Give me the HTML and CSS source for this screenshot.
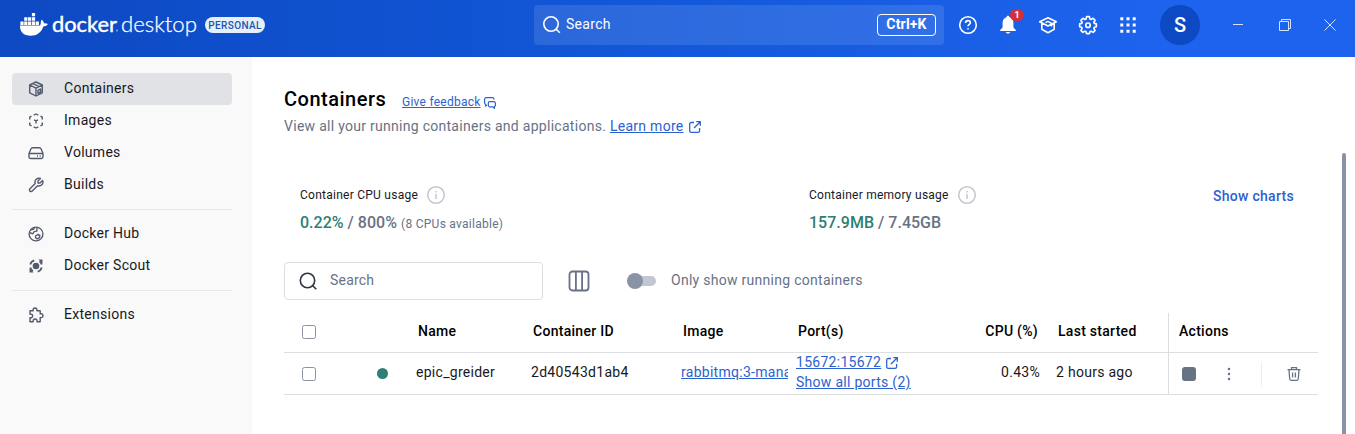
FILE: index.html
```html
<!DOCTYPE html>
<html lang="en">
<head>
<meta charset="utf-8">
<title>Docker Desktop</title>
<link rel="stylesheet" href="styles.css">
</head>
<body>
<header class="topbar">
  <div class="brand">
    <svg class="logo" width="178" height="36" viewBox="0 0 178 36" fill="#fff">
      <path d="M0 13.6h19.6c.8-.5 1.300-1.300 1.200-2.500-.1-1.300.1-2.300.8-3.300 1.500 1 2.200 2 2.300 3.400 1.500-.2 2.900 0 4 .7-.9 1.700-2.300 2.300-4.400 2.300C21.200 20.500 17 23.700 10.600 23.700 3.700 23.700-.3 20.200 0 13.600z"/>
      <path d="M.4 9.600h3.200v3.300H.4zM4.200 9.600h3.200v3.300H4.200zM8 9.600h3.200v3.300H8zM11.900 9.600h3.200v3.300h-3.200zM15.700 9.600h3.200v3.300h-3.200zM4.200 5.300h3.200v3.500H4.200zM8 5.300h3.200v3.500H8zM11.900 5.300h3.200v3.500h-3.200zM11.900 1.100h3.200V4.300h-3.200z"/>
      <text class="logo-docker" x="32" y="19.800" textLength="65" lengthAdjust="spacingAndGlyphs">docker</text>
      <circle cx="97" cy="18.500" r=".9" fill="#8fb4f5"/>
      <text class="logo-desktop" x="101" y="19.800" textLength="76" lengthAdjust="spacingAndGlyphs">desktop</text>
    </svg>
    <span class="plan">PERSONAL</span>
  </div>
  <div class="global-search">
    <svg width="20" height="20" viewBox="0 0 20 20" fill="none" stroke="#fff" stroke-width="1.600"><circle cx="9" cy="9" r="7.200"/><path d="M14 14l3.800 3.800"/></svg>
    <span class="global-label">Search</span>
    <kbd>Ctrl+K</kbd>
  </div>
  <div class="tools">
    <svg width="20" height="20" viewBox="0 0 20 20" fill="none" stroke="#fff" stroke-width="1.600"><circle cx="10" cy="10" r="8.300"/><path d="M7.600 8c0-1.500 1-2.400 2.400-2.400s2.400.9 2.400 2.200c0 1.600-2.400 1.700-2.400 3.500" /><circle cx="10" cy="13.800" r=".5" fill="#fff" stroke-width=".8"/></svg>
    <span class="bell">
      <svg width="20" height="20" viewBox="0 0 20 20" fill="#fff"><path d="M10 .8c.9 0 1.500.6 1.500 1.500 2.400.7 3.900 2.800 3.900 5.500v4.700l2.400 2.600v1H2.200v-1l2.400-2.600V7.800c0-2.700 1.500-4.800 3.900-5.500C8.500 1.400 9.100.8 10 .8zM7.800 17h4.400c-.3 1-1.200 1.500-2.200 1.500S8.100 18 7.800 17z"/></svg>
      <b class="count">1</b>
    </span>
    <svg width="20" height="20" viewBox="0 0 20 20" fill="none" stroke="#fff" stroke-width="1.600" stroke-linejoin="round"><path d="M10 2.700L1.700 6.800 10 11l8.300-4.200zM3.800 8.200v6l6.200 3.500 6.200-3.500v-6M7.500 7.600L10 6.400l3.500 2v3"/></svg>
    <svg width="20" height="20" viewBox="0 0 24 24" fill="none" stroke="#fff" stroke-width="2" stroke-linejoin="round"><path d="M10.300 2h3.400l.6 2.800 1.400.6 2.400-1.500 2.400 2.400-1.500 2.400.6 1.400 2.400.6v3.400l-2.400.6-.6 1.400 1.500 2.400-2.400 2.400-2.400-1.500-1.400.6-.6 2.400h-3.400l-.6-2.400-1.400-.6-2.400 1.500-2.400-2.400L5 16.100l-.6-1.400-2.400-.6v-3.400l2.400-.6.600-1.400-1.500-2.400 2.400-2.400 2.400 1.500 1.400-.6z"/><circle cx="12" cy="12.300" r="2.700"/></svg>
    <svg width="20" height="20" viewBox="0 0 20 20" fill="#fff"><path d="M2.300 2.300h3v3h-3zM8.500 2.300h3v3h-3zM14.700 2.300h3v3h-3zM2.300 8.500h3v3h-3zM8.500 8.500h3v3h-3zM14.700 8.500h3v3h-3zM2.300 14.700h3v3h-3zM8.500 14.700h3v3h-3zM14.700 14.700h3v3h-3z"/></svg>
  </div>
  <span class="avatar">S</span>
  <div class="window">
    <svg width="12" height="12" viewBox="0 0 12 12"><path d="M1 5.500h10"/></svg>
    <svg width="12" height="12" viewBox="0 0 12 12"><path d="M.5 2.500h9v9h-9zM2.500 2.500v-2h9v9h-2"/></svg>
    <svg width="12" height="12" viewBox="0 0 12 12"><path d="M.5.500l11 11M11.500.500l-11 11"/></svg>
  </div>
</header>
<div class="body">
  <nav class="sidebar">
    <a class="item active"><svg width="16" height="16" viewBox="0 0 16 16"><path d="M8 1l6.300 3v7.800L8 15l-6.300-3.200V4zM1.700 4L8 7.200 14.300 4M8 7.200V15M4.800 2.500l6.300 3.200M10 9.300l2.600-1.300v3L10 12.300z"/></svg>Containers</a>
    <a class="item"><svg width="16" height="16" viewBox="0 0 16 16"><path d="M5.700 2.200L8 1l2.300 1.200M12.500 3.200l1.800 1v2.300M14.300 9.500v2.300l-1.800 1M10.300 13.800L8 15l-2.300-1.200M3.500 12.800l-1.800-1V9.500M1.700 6.500V4.200l1.800-1M6 6.800l2 1 2-1M8 7.800v2.600"/></svg>Images</a>
    <a class="item"><svg width="16" height="16" viewBox="0 0 16 16"><path d="M1 8.500l2-4.700C3.300 3 4 2.700 4.700 2.700h6.600c.7 0 1.400.3 1.700 1.100l2 4.700v3.300c0 1-.6 1.700-1.700 1.700H2.700C1.600 13.500 1 12.800 1 11.800zM1 8.500h14M9 11h1M11.700 11h1"/></svg>Volumes</a>
    <a class="item"><svg width="16" height="16" viewBox="0 0 16 16"><path d="M12.500 1.500L10 4v2h2l2.600-2.500c.6 1.700.3 3.200-.8 4.300-1.200 1.200-2.800 1.500-4.200 1L4.300 14c-.7.700-1.600.7-2.300.100s-.7-1.600 0-2.300l5.200-5.300c-.5-1.400-.2-3 1-4.200 1.100-1 2.700-1.400 4.300-.800z"/></svg>Builds</a>
    <hr>
    <a class="item"><svg width="16" height="16" viewBox="0 0 16 16"><circle cx="8" cy="8" r="6.900"/><path d="M1.500 6.500l3.200 1.300 1.500-2.200 2.600-.5L9 1.300M3 3.700l2.500-.3L6.700 1.500M7.500 10l2.300-1.500 2 1-.3 2.200-2.200 1.200-1.600-1z"/></svg>Docker Hub</a>
    <a class="item"><svg width="16" height="16" viewBox="0 0 16 16"><circle cx="8" cy="8" r="3.300" fill="#535c6d" stroke="none"/><path d="M2.300 6.500C2.700 4.500 4 3 6.300 2.300M9.700 13.700c2-.6 3.400-2 4-4.200M2.300 9.500c.4 1.800 1.400 3 2.700 3.700M13.700 6.500c-.3-1.300-1-2.400-2.200-3.200" stroke-width="1.800"/><path d="M10.500 1.500h4v4zM1.500 10.500v4h4z" fill="#535c6d" stroke="none"/></svg>Docker Scout</a>
    <hr>
    <a class="item"><svg width="16" height="16" viewBox="0 0 16 16"><path d="M2 3.700h3.200C4.700 2 5.600 1 7 1s2.300 1 1.800 2.700h3.400v3.200c1.800-.4 2.800.5 2.800 1.800s-1 2.200-2.800 1.800v4.200H9c.4-1.700-.5-2.700-1.900-2.700s-2.200 1-1.900 2.700H2v-4c1.700.3 2.600-.5 2.600-1.800S3.700 6.800 2 7.200z"/></svg>Extensions</a>
  </nav>
  <main class="content">
    <div class="heading"><h1>Containers</h1><a class="feedback">Give feedback</a><svg class="fb-icon" width="12" height="12" viewBox="0 0 12 12"><path d="M3 8.300L1.700 9V7.500C1 7.300.6 6.800.6 6V2.300C.6 1.300 1.200.7 2.200.7h6.200c1 0 1.600.6 1.600 1.600v.5M5.800 4.700h4c1 0 1.600.6 1.600 1.500v2c0 .8-.4 1.300-1 1.500v1.600L8.700 9.800H5.800c-1 0-1.500-.6-1.500-1.500V6.200c0-.9.500-1.500 1.500-1.500z"/></svg></div>
    <p class="subtitle">View all your running containers and applications. <a>Learn more</a><svg class="ext" width="12" height="12" viewBox="0 0 12 12"><path d="M5 1.500H2.300C1.300 1.500.7 2 .7 3v6.700c0 1 .6 1.600 1.600 1.600H9c1 0 1.600-.6 1.600-1.600V7M7.300.7h4v4M11.300.7L5 7"/></svg></p>
    <section class="stats">
      <div class="stat">
        <div class="stat-label"><span>Container CPU usage</span><svg width="20" height="20" viewBox="0 0 20 20"><circle cx="10" cy="10" r="8.300"/><path d="M10 9v5M10 6v1.500"/></svg></div>
        <div class="stat-value"><em>0.22%</em> / 800% <small>(8 CPUs available)</small></div>
      </div>
      <div class="stat memory">
        <div class="stat-label"><span>Container memory usage</span><svg width="20" height="20" viewBox="0 0 20 20"><circle cx="10" cy="10" r="8.300"/><path d="M10 9v5M10 6v1.500"/></svg></div>
        <div class="stat-value"><em>157.9MB</em> / 7.45GB</div>
      </div>
      <a class="charts">Show charts</a>
    </section>
    <div class="filters">
      <div class="search"><svg width="20" height="20" viewBox="0 0 20 20" fill="none" stroke="#30353f" stroke-width="1.600"><circle cx="9.500" cy="9.500" r="7.200"/><path d="M14.500 14.500l3.800 3.800"/></svg><span>Search</span></div>
      <svg class="columns" width="22" height="22" viewBox="0 0 22 22"><rect x="1.500" y="1.500" width="19" height="19" rx="3"/><path d="M7.900 1.500v19M14.100 1.500v19"/></svg>
      <span class="switch"></span>
      <span class="switch-label">Only show running containers</span>
    </div>
    <div class="table">
      <div class="row head">
        <span class="select"><i class="box"></i></span>
        <span>Name</span><span>Container ID</span><span>Image</span><span>Port(s)</span><span class="num">CPU (%)</span><span>Last started</span><span class="actions">Actions</span>
      </div>
      <div class="row data">
        <span class="select"><i class="box"></i><i class="dot"></i></span>
        <span>epic_greider</span><span>2d40543d1ab4</span>
        <span class="image"><a>rabbitmq:3-management</a></span>
        <span class="ports"><span><a>15672:15672</a><svg class="ext" width="12" height="12" viewBox="0 0 12 12"><path d="M5 1.500H2.300C1.300 1.500.7 2 .7 3v6.700c0 1 .6 1.600 1.600 1.600H9c1 0 1.600-.6 1.600-1.600V7M7.300.7h4v4M11.300.7L5 7"/></svg></span><a>Show all ports (2)</a></span>
        <span class="num">0.43%</span><span>2 hours ago</span>
        <span class="actions buttons"><i class="stop"></i>
          <svg width="4" height="14" viewBox="0 0 4 14" fill="#677285"><circle cx="2" cy="2" r="1.250"/><circle cx="2" cy="7" r="1.250"/><circle cx="2" cy="12" r="1.250"/></svg>
          <i class="rule"></i>
          <svg width="14" height="16" viewBox="0 0 14 16" fill="none" stroke="#677285" stroke-width="1.300"><path d="M.5 3.600h13M4.500 3.500V1.700h5v1.800M2 3.600l.7 9.200c.1 1 .6 1.500 1.500 1.500h5.600c.9 0 1.400-.5 1.500-1.500l.7-9.200M5.600 6.500v5M8.400 6.500v5"/></svg>
        </span>
      </div>
    </div>
  </main>
  <i class="scrollbar"></i>
</div>
</body>
</html>
```
FILE: styles.css
```css
* { box-sizing: border-box; }
body { margin: 0; width: 1355px; height: 434px; overflow: hidden; background: #fff; color: #17191e; font: 14px/20px Roboto, sans-serif; letter-spacing: .28px; }
svg { flex: none; display: block; }
a { color: #2c62cf; }

.topbar { display: flex; height: 57px; background: linear-gradient(90deg, #0d49c2, #1257d8 45%, #1d63ed 85%); color: #fff; }
.brand { display: flex; width: 534px; padding: 12px 0 0 20px; align-items: flex-start; }
.logo { overflow: visible; }
.logo-docker { font: 400 21px Lato, sans-serif; letter-spacing: 0; stroke: #fff; stroke-width: .4; }
.logo-desktop { font: 300 21px Lato, sans-serif; letter-spacing: 0; stroke: #fff; stroke-width: .25; }
.plan { width: 60px; height: 16px; margin: 5px 0 0 7px; border-radius: 8px; background: #e5f0fd; color: #2454ac; font-size: 10px; font-weight: 500; line-height: 17px; letter-spacing: .4px; text-align: center; }
.global-search { display: flex; width: 410px; height: 40px; margin-top: 5px; padding: 0 8px; align-items: center; border-radius: 4px; background: rgba(255, 255, 255, .11); letter-spacing: .3px; }
.global-label { flex: 1; padding: 0 0 2px 4px; }
kbd { width: 59px; height: 22px; border: 1px solid #fff; border-radius: 4px; font: 700 14px/19px Roboto, sans-serif; letter-spacing: .2px; text-align: center; }
.tools { display: flex; gap: 20px; padding: 15px 0 0 14px; }
.bell { position: relative; }
.count { position: absolute; left: 12px; top: -6px; width: 14px; height: 12px; border-radius: 6px; background: #d32f3c; font: 700 9px/12px Roboto, sans-serif; text-align: center; letter-spacing: 0; }
.avatar { width: 40px; height: 40px; margin: 5px 0 0 22px; border-radius: 50%; background: #0c49c2; font-size: 20px; font-weight: 500; line-height: 40px; text-align: center; letter-spacing: 0; }
.window { display: flex; gap: 34px; padding: 19px 0 0 32px; fill: none; stroke: #d6e3fd; stroke-width: 1; }
.window svg:nth-child(2) { margin: 0 -1px 0 1px; }

.body { display: flex; height: 377px; }
.sidebar { width: 252px; padding: 16px 20px 0 12px; background: #f9f9fa; }
.item { display: flex; height: 32px; padding: 0 0 2px 16px; align-items: center; gap: 20px; border-radius: 4px; color: #17191e; }
.item svg { margin-top: 2px; fill: none; stroke: #535c6d; stroke-width: 1.4; stroke-linejoin: round; }
.active { background: #e1e2e6; }
hr { height: 1px; margin: 8px 0; border: 0; background: #e6e7ea; }

.content { width: 1034px; margin-left: 32px; padding-top: 30px; }
.heading { display: flex; height: 25px; align-items: flex-start; }
h1 { width: 118px; margin: 0; color: #000; font-size: 20px; font-weight: 500; line-height: 24px; letter-spacing: .5px; }
.feedback { padding-top: 5px; font-size: 12px; text-decoration: underline; letter-spacing: .25px; }
.fb-icon { margin: 10px 0 0 3px; fill: none; stroke: #2c62cf; stroke-width: 1.2; }
.subtitle { display: flex; height: 20px; margin: 4px 0 0; white-space: pre; color: #677285; }
.subtitle a, .data a { text-decoration: underline; }
.ext { margin: 5px 0 0 5px; fill: none; stroke: #2c62cf; stroke-width: 1.3; }
.stats { display: flex; height: 126px; padding: 49px 0 0 16px; }
.stat { width: 509px; flex: none; }
.memory { width: 404px; }
.stat-label { display: flex; height: 20px; align-items: center; gap: 8px; font-size: 12px; letter-spacing: .25px; }
.stat-label svg { fill: none; stroke: #c4c7cd; stroke-width: 1.5; }
.stat-value { margin-top: 8px; color: #677285; font-size: 16px; font-weight: 500; letter-spacing: .02px; }
.stat-value em { color: #2e7f74; font-style: normal; }
.stat-value small { font-size: 12px; font-weight: 400; letter-spacing: .27px; }
.charts { padding-top: 1px; font-weight: 500; white-space: nowrap; }
.filters { display: flex; height: 38px; align-items: center; color: #677285; }
.search { display: flex; width: 259px; height: 38px; padding: 0 13px; align-items: center; gap: 12px; border: 1px solid #dcdee2; border-radius: 4px; letter-spacing: .2px; }
.search span, .switch-label { padding-bottom: 2px; }
.columns { margin-left: 25px; fill: none; stroke: #677285; stroke-width: 1.8; }
.switch { display: flex; width: 28px; height: 10px; margin-left: 38px; align-items: center; border-radius: 5px; background: #c3c7d1; }
.switch::before { width: 16px; height: 16px; flex: none; margin-left: -1px; border-radius: 50%; background: #8993a5; content: ""; }
.switch-label { margin-left: 15px; }
.table { margin-top: 13px; }
.row { display: grid; grid-template-columns: 124px 115px 150px 115px 135px 125px 120px 150px; border-bottom: 1px solid #dcdee2; align-items: center; }
.row > span { padding: 0 8px 3px; white-space: nowrap; }
.head { height: 40px; font-weight: 500; color: #000; }
.head > span { padding: 0 10px 3px; }
.data { height: 42px; grid-template-rows: 41px; }
.row > .select { display: flex; padding: 0 0 0 18px; align-items: center; }
.head > .select { padding-bottom: 2px; }
.box { width: 14px; height: 14px; border: 1.5px solid #8993a5; border-radius: 2.5px; }
.dot { width: 11px; height: 11px; margin-left: 61px; border-radius: 50%; background: #2e7f74; }
.num { text-align: right; }
.row > .actions { align-self: stretch; border-left: 1px solid #dcdee2; line-height: 36px; }
.row > .image { overflow: hidden; padding: 0 0 3px; margin-left: 8px; }
.row > .ports { display: flex; flex-direction: column; align-self: start; margin-top: -1px; padding-bottom: 0; }
.ports > span { display: flex; }
.row > .buttons { display: flex; padding: 0 0 0 13px; align-items: center; }
.stop { width: 14px; height: 14px; border-radius: 3px; background: #677285; }
.buttons svg:first-of-type { margin-left: 31px; }
.rule { width: 1px; height: 24px; margin: 0 25px 0 30px; background: #eceef0; }
.scrollbar { width: 4px; height: 281px; margin: 96px 0 0 24px; border-radius: 2px 2px 0 0; background: #8993a5; }
```
